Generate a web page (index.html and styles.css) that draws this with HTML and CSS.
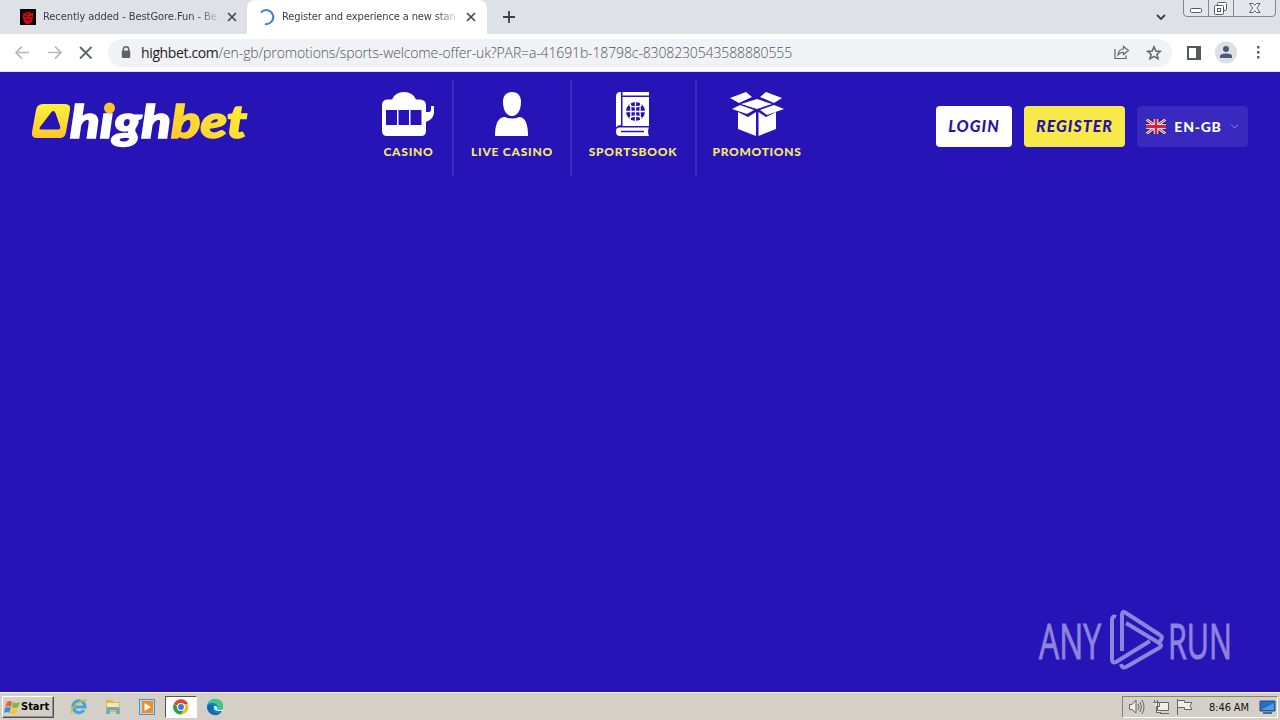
FILE: index.html
```html
<!DOCTYPE html>
<html lang="en">
<head>
<meta charset="utf-8">
<title>highbet</title>
<link rel="stylesheet" href="styles.css">
</head>
<body>
<div class="screen">
  <header class="tabstrip">
    <div class="tab tab-first">
      <svg class="favicon" width="16" height="16" viewBox="0 0 16 16"><rect width="16" height="16" fill="#080000"/><path d="M3 6L4 3L5 5L7 2L8 4L10 2L11 5L13 3V8L12 13L9 15H6L4 13L3 9Z" fill="#d40a12"/><path d="M4 7L7 8M9 8L12 7M5 11L7 10L8 12L10 10L11 11M6 4L7 6L9 4" stroke="#310003" fill="none"/></svg>
      <span class="tab-title">Recently added - BestGore.Fun - Be</span>
      <svg class="tab-close" width="10" height="10" viewBox="0 0 10 10"><path d="M1 1L9 9M9 1L1 9" stroke="#45494e" stroke-width="1.7"/></svg>
    </div>
    <div class="tab tab-active">
      <svg class="spinner" width="16" height="16" viewBox="0 0 16 16"><path d="M2 3.500A7 7 0 1 1 6 15" fill="none" stroke="#4a80d4" stroke-width="2"/></svg>
      <span class="tab-title title-active">Register and experience a new stan</span>
      <svg class="tab-close" width="10" height="10" viewBox="0 0 10 10"><path d="M1 1L9 9M9 1L1 9" stroke="#45494e" stroke-width="1.7"/></svg>
    </div>
    <svg class="new-tab" width="12" height="12" viewBox="0 0 12 12"><path d="M6 0V12M0 6H12" stroke="#3c4043" stroke-width="1.8"/></svg>
    <svg class="tab-search" width="10" height="7" viewBox="0 0 10 7"><path d="M1 1L5 5L9 1" fill="none" stroke="#3c4043" stroke-width="1.8"/></svg>
    <svg class="window-controls" width="94" height="18" viewBox="0 0 94 18"><path d="M.5 0V13Q.5 16.500 4 16.500H89Q92.500 16.500 92.500 13V0M25.500 0V16.500M50.500 0V16.500" fill="#e3e6ea" stroke="#81868f"/><rect x="7.500" y="8.500" width="11" height="4" rx="1" fill="#fff" stroke="#555b66"/><rect x="34.500" y="2.500" width="9" height="8" rx="1" fill="#fff" stroke="#555b66"/><rect x="31.500" y="5.500" width="9" height="9" rx="1" fill="#fff" stroke="#555b66"/><rect x="34.500" y="8.500" width="3" height="3" fill="none" stroke="#555b66"/><path d="M66.500 3.500H70L71.700 5.500L73.500 3.500H77L73.800 8L77 12.500H73.500L71.700 10.500L70 12.500H66.500L69.700 8Z" fill="#fff" stroke="#555b66"/></svg>
  </header>
  <div class="toolbar">
    <svg class="nav-tools" width="80" height="14" viewBox="0 0 80 14"><path d="M14 6.500H1M7 .5L1 6.500L7 12.500M33 6.500H46M40 .5L46 6.500L40 12.500" fill="none" stroke="#b5b7ba" stroke-width="1.700"/><path d="M65 1L76.500 12.500M76.500 1L65 12.500" stroke="#5f6368" stroke-width="1.800"/></svg>
    <div class="omnibox">
      <svg class="lock" width="10" height="13" viewBox="0 0 10 13"><path d="M2.300 5V3.500A2.700 2.700 0 0 1 7.700 3.500V5" fill="none" stroke="#5f6368" stroke-width="1.400"/><rect x=".8" y="4.600" width="8.400" height="7.400" rx="1" fill="#5f6368"/></svg>
      <div class="url"><b>highbet.com</b>/en-gb/promotions/sports-welcome-offer-uk?PAR=a-41691b-18798c-8308230543588880555</div>
      <svg class="share" width="16" height="15" viewBox="0 0 16 15"><path d="M1 4V13.500H12V10.500" fill="none" stroke="#5f6368" stroke-width="1.200"/><path d="M9.500 1.500L14.500 5.500L9.500 9.500V7.200Q6 7.200 4 10Q4.500 4.500 9.500 3.800Z" fill="none" stroke="#5f6368" stroke-width="1.100"/></svg>
      <svg class="star" width="16" height="16" viewBox="0 0 16 16"><path d="M8 1.800L9.800 6L14.300 6.400L10.900 9.300L12 13.800L8 11.400L4 13.800L5.100 9.300L1.700 6.400L6.200 6Z" fill="none" stroke="#5f6368" stroke-width="1.500"/></svg>
    </div>
    <svg class="side-panel" width="14" height="14" viewBox="0 0 14 14"><path d="M1 1H13V13H1Z" fill="none" stroke="#55585d" stroke-width="2"/><path d="M9 1H13V13H9Z" fill="#55585d"/></svg>
    <svg class="avatar" width="22" height="22" viewBox="0 0 22 22"><circle cx="11" cy="10.500" r="11" fill="#dcdfe4"/><circle cx="11" cy="7" r="3" fill="#4b5a78"/><path d="M5 16V14Q5 11.500 11 11.500T17 14V16Z" fill="#4b5a78"/></svg>
    <svg class="kebab" width="4" height="14" viewBox="0 0 4 14"><path d="M0 0h2.500v2.500h-2.500zM0 5h2.500v2.500h-2.500zM0 10h2.500v2.500h-2.500z" fill="#5f6368"/></svg>
  </div>
  <main class="page">
    <svg class="logo" width="218" height="60" viewBox="0 0 218 60">
      <defs><linearGradient id="gold" x2="0" y2="1"><stop stop-color="#fff23b"/><stop offset="1" stop-color="#fdc52b"/></linearGradient><linearGradient id="bet" x1="0" y1="1" x2="1" y2="0"><stop stop-color="#fdc52b"/><stop offset="1" stop-color="#fff43b"/></linearGradient></defs>
      <path fill-rule="evenodd" d="M11 7H33Q39 7 38 13L34 35Q33 41 28 41H5Q-1 41 0 35L4 13Q5 7 11 7ZM19.500 15L8 30Q6.500 32.500 9.500 32.500H26Q29 32.500 28 29L23.500 16Q22 12.500 19.500 15Z" fill="url(#gold)"/>
      <text class="logo-text" x="38" y="41" textLength="101" lengthAdjust="spacingAndGlyphs" fill="#fff" stroke="#fff">hıgh</text>
      <text class="logo-text" x="139" y="41" textLength="76" lengthAdjust="spacingAndGlyphs" fill="url(#bet)" stroke="url(#bet)">bet</text>
      <circle cx="77.500" cy="11" r="5.500" fill="#fdc22d"/>
    </svg>
    <nav class="menu">
      <a class="menu-item casino"><svg width="53" height="44" viewBox="0 0 53 44"><path d="M5 7.500H10Q13 0 22 0T34 7.500H38Q44 8 44 13V20H47Q49 20 49 17V14H52V20Q52 27 44 30V39Q44 44 39 44H5Q0 44 0 39V13Q0 8 5 7.500Z" fill="#fff"/><path d="M4 18H15V33H4ZM16.500 18H27V33H16.500ZM28.500 18H39.500V33H28.500Z" fill="#2614b7"/></svg><span>CASINO</span></a>
      <a class="menu-item live"><svg width="34" height="44" viewBox="0 0 34 44"><path d="M17 0C23 0 26 4 26 10C26 17 23 24 17 24S8 17 8 10C8 4 11 0 17 0ZM10 25Q17 28 24 25Q33 25 33 44H0Q0 25 10 25Z" fill="#fff"/></svg><span>LIVE CASINO</span></a>
      <a class="menu-item sports"><svg width="34" height="44" viewBox="0 0 34 44"><path d="M4 0H5V33Q2 33 0 35V5Q0 0 4 0ZM6.500 0H33V3.500H6.500ZM6.500 5H33V34H6.500ZM4 35.500H33Q31 39 33 44H4Q0 44 0 39.500T4 35.500Z" fill="#fff"/><circle cx="19.500" cy="19.500" r="9.500" fill="#2614b7"/><path d="M19.500 9V30M9 19.500H30M13 13Q19.500 17 26 13M13 26Q19.500 22 26 26M14 10Q16 19 14 29M25 10Q23 19 25 29" fill="none" stroke="#fff" stroke-width="1.300"/><path d="M5 39.500H28" stroke="#2614b7" stroke-width="1.500"/></svg><span>SPORTSBOOK</span></a>
      <a class="menu-item promos"><svg width="54" height="44" viewBox="0 0 54 44"><path d="M0 6L16 0L22 5L9 11ZM30 5L36 0L52 6L44 11ZM11 12L27 7L42 12L27 17ZM2 17L10 13L24 18L17 22ZM30 18L44 13L54 17L37 23ZM8 20L18 25L26 20V44L8 37ZM28.500 20L36 25L46 20V37L28.500 44Z" fill="#fff"/></svg><span>PROMOTIONS</span></a>
    </nav>
    <div class="actions">
      <button class="button login"><span>LOGIN</span></button>
      <button class="button register"><span>REGISTER</span></button>
      <button class="button language"><svg class="flag" width="20" height="15" viewBox="0 0 20 15"><rect width="20" height="15" fill="#20287c"/><path d="M0 0L20 15M20 0L0 15" stroke="#eee" stroke-width="2.800"/><path d="M0 0L20 15M20 0L0 15" stroke="#d91d43" stroke-width="1"/><path d="M10 0V15M0 7.500H20" stroke="#fff" stroke-width="4.600"/><path d="M10 0V15M0 7.500H20" stroke="#d91d43" stroke-width="2.800"/></svg><span>EN-GB</span><svg class="chevron" width="9" height="5" viewBox="0 0 9 5"><path d="M1 .5L4.500 4L8 .5" fill="none" stroke="#9186df"/></svg></button>
    </div>
    <svg class="watermark" width="194" height="64" viewBox="0 0 194 64">
      <g fill="#8e84db" stroke="#8e84db"><text class="wm-text" x="1" y="49.500" textLength="62" lengthAdjust="spacingAndGlyphs">ANY</text><text class="wm-text" x="130" y="49.500" textLength="64" lengthAdjust="spacingAndGlyphs">RUN</text></g>
      <g fill="none" stroke="#8e84db" stroke-width="4" stroke-linejoin="round"><path d="M78 8Q74 6 74 12V50Q74 55 78 53L112 32"/><path d="M122 26L88 4Q84 1 84 6V42M88 14L121 34Q125 37 121 39L88 58Q84 60 83 55"/><path d="M120 34L123 31Q125 28 122 26"/></g>
    </svg>
  </main>
  <footer class="taskbar">
    <div class="start"><svg width="17" height="16" viewBox="0 0 17 16"><path d="M3 3Q6 1 8 3L7 8Q4 6 1 8Z" fill="#e9632e"/><path d="M9 3Q12 5 16 3L14 8Q11 10 8 8Z" fill="#79b943"/><path d="M1 9Q4 7 7 9L5 14Q3 12 0 14Z" fill="#3f8ed7"/><path d="M8 9Q11 11 14 9L12 14Q9 16 6 14Z" fill="#f6c52f"/></svg><span>Start</span></div>
    <div class="quick">
      <svg width="18" height="18" viewBox="0 0 18 18"><path d="M14 12A6 6 0 1 1 15 9H4" fill="none" stroke="#42a5d7" stroke-width="3"/><path d="M2 16Q-1 12 7 6T17 3" fill="none" stroke="#e2b63d" stroke-width="1.500"/></svg>
      <svg width="18" height="18" viewBox="0 0 18 18"><path d="M2 2H8L10 4H16V14H2Z" fill="#e0b851"/><path d="M3 5H15V12H3Z" fill="#f9e7a4"/><path d="M3 9H15L16 16H12V12H6V16H2Z" fill="#67acc6"/></svg>
      <svg width="18" height="18" viewBox="0 0 18 18"><rect x="1.500" y="1.500" width="15" height="15" fill="#b7d5e9" stroke="#4d91c3"/><rect x="4" y="3" width="11" height="12" fill="#f28b20"/><path d="M6.500 5L13 9L6.500 13Z" fill="#fff"/></svg>
      <div class="task-active"><svg width="16" height="16" viewBox="0 0 16 16"><circle cx="8" cy="8" r="7.500" fill="#eac12d"/><path d="M8 8L1 5A7.500 7.500 0 0 1 15 5H8Z" fill="#dd4638"/><path d="M1 4.500A7.500 7.500 0 0 0 8 15.500L11 10L5 9Z" fill="#2d9b52"/><circle cx="8" cy="8" r="4" fill="#fff"/><circle cx="8" cy="8" r="2.900" fill="#3d78dd"/></svg></div>
      <svg class="edge" width="18" height="18" viewBox="0 0 18 18"><circle cx="9" cy="9" r="8" fill="#1380cd"/><path d="M1 7Q3 1 9 1Q17 1 17 8Q17 12 12 12Q10 11 12 8Q7 2 1 7Z" fill="#43c78b"/><path d="M7 8Q5 13 10 15Q13 16 16 13Q13 18 8 17Q1 15 1 8Q4 5 7 8Z" fill="#1767b0"/><path d="M8 8Q7 13 13 13H17V11Q13 13 11 11Q12 9 10 8Z" fill="#dff6ff"/></svg>
    </div>
    <div class="tray">
      <svg width="66" height="18" viewBox="0 0 66 18"><g fill="#eee" stroke="#666"><path d="M1.500 6.500H4L8 2V15L4 11.500H1.500Z"/><path d="M10 6Q12 9 10 12M12 4Q15 9 12 14M14 2Q18 9 14 16" fill="none"/><path d="M29.500 4.500H40.500V12.500H29.500ZM32 15.500H41M26.500 2V5M29.500 2V5M25.500 4.500H31.500V8.500H28.500V14.500H33"/><path d="M49.500 1V17M49.500 2.500H56.500V4.500H64L62 8L64 11.500H56.500V9.500H49.500"/></g></svg>
      <span>8:46 AM</span>
      <svg class="desktop" width="17" height="15" viewBox="0 0 17 15"><path d="M1 1H16V11H1Z" fill="#246fc1" stroke="#284b76"/><path d="M2 10L15 3V10Z" fill="#4b9be3"/><path d="M4 13H13" stroke="#56687d" stroke-width="2"/></svg>
    </div>
  </footer>
</div>
</body>
</html>
```
FILE: styles.css
```css
* { box-sizing: border-box; }
body { margin: 0; overflow: hidden; }
svg { display: block; flex: none; overflow: visible; }
.screen { width: 1280px; height: 720px; display: flex; flex-direction: column; font-family: "DejaVu Sans Condensed", "DejaVu Sans", sans-serif; }
.tabstrip { height: 34px; background: #dee1e6; display: flex; align-items: center; }
.tab { height: 34px; display: flex; align-items: center; }
.tab-first { width: 247px; padding-left: 20px; background: #dee1e6; border-radius: 0 0 8px 0; }
.tab-active { width: 240px; padding-left: 12px; background: #fff; border-radius: 8px 8px 0 0; }
.tab-title { margin-left: 7px; width: 175px; height: 16px; line-height: 16px; white-space: nowrap; font-size: 11px; letter-spacing: -.06px; color: #3c4043; -webkit-mask-image: linear-gradient(90deg, #000 88%, transparent 102%); mask-image: linear-gradient(90deg, #000 88%, transparent 102%); }
.title-active { letter-spacing: -.12px; }
.tab-close { margin-left: 9px; }
.new-tab { margin-left: 16px; }
.tab-search { margin-left: 641px; }
.window-controls { margin-left: 17px; align-self: flex-start; }
.toolbar { height: 38px; padding-left: 15px; background: #fff; border-bottom: 1px solid #dcdde8; display: flex; align-items: center; }
.omnibox { width: 1064px; height: 28px; margin-left: 13px; padding-left: 13px; border-radius: 14px; background: #f0f2f5; display: flex; align-items: center; }
.url { width: 652px; margin-left: 10px; font: 300 14px/20px "Open Sans", sans-serif; letter-spacing: -.13px; color: #50545a; white-space: nowrap; }
.url b { font-weight: 400; letter-spacing: -.37px; color: #202124; }
.share { margin-left: 321px; }
.star { margin-left: 16px; }
.side-panel { margin-left: 15px; }
.avatar { margin-left: 14px; }
.kebab { margin-left: 20px; }
.page { position: relative; height: 620px; background: #2614b7; display: flex; align-items: flex-start; }
.logo { margin: 25px 0 0 32px; }
.logo-text { font: italic 900 46px Lato, sans-serif; stroke-width: 1.6; }
.menu { margin-left: 115px; padding-top: 8px; display: flex; }
.menu-item { height: 96px; padding-top: 12px; border-right: 2px solid #3c2bc3; display: flex; flex-direction: column; align-items: center; gap: 8px; color: #f5e96d; font: 900 12px/16px Lato, sans-serif; letter-spacing: .75px; white-space: nowrap; }
.casino { width: 89px; }
.live { width: 118px; }
.sports { width: 125px; padding-right: 1px; }
.promos { width: 124px; padding-right: 4px; border-right: 0; letter-spacing: .65px; }
.actions { margin: 34px 0 0 115px; display: flex; gap: 12px; }
.button { height: 41px; border: 0; border-radius: 4px; padding: 0; display: flex; align-items: center; justify-content: center; font: italic 900 16px/20px Lato, sans-serif; letter-spacing: 1px; color: #2614a8; white-space: nowrap; }
.login, .register { padding-bottom: 2px; }
.login { width: 76px; background: #fff; }
.register { width: 101px; background: #f8e94b; }
.language { width: 111px; background: #3929bf; color: #fff; gap: 8px; font: 900 14px/20px Lato, sans-serif; letter-spacing: .75px; }
.flag { overflow: hidden; }
.watermark { position: absolute; left: 1038px; top: 537px; }
.wm-text { font: 400 50px "Open Sans", sans-serif; stroke-width: 1; }
.taskbar { height: 28px; padding: 1px 2px 0; background: #d4d0c8; border-top: 1px solid #f5f4f0; display: flex; align-items: center; }
.start { width: 52px; height: 22px; border: 1px solid; border-color: #fff #55524d #55524d #fff; box-shadow: inset -1px -1px #96928b; display: flex; align-items: center; font: 700 11px/16px "DejaVu Sans Condensed", sans-serif; padding-left: 1px; }
.quick { display: flex; align-items: center; margin-left: 16px; gap: 16px; }
.task-active { width: 32px; height: 22px; margin-left: -7px; border: 1px solid; border-color: #55524d #fff #fff #55524d; background: #fff; display: flex; align-items: center; justify-content: center; }
.edge { margin-left: -7px; }
.tray { width: 156px; height: 22px; margin-left: auto; padding-left: 5px; border: 1px solid; border-color: #85817b #fff #fff #85817b; display: flex; align-items: center; font-size: 11px; color: #111; }
.tray span { width: 44px; margin-left: 15px; white-space: nowrap; letter-spacing: -.1px; }
.desktop { margin-left: 6px; }
```
